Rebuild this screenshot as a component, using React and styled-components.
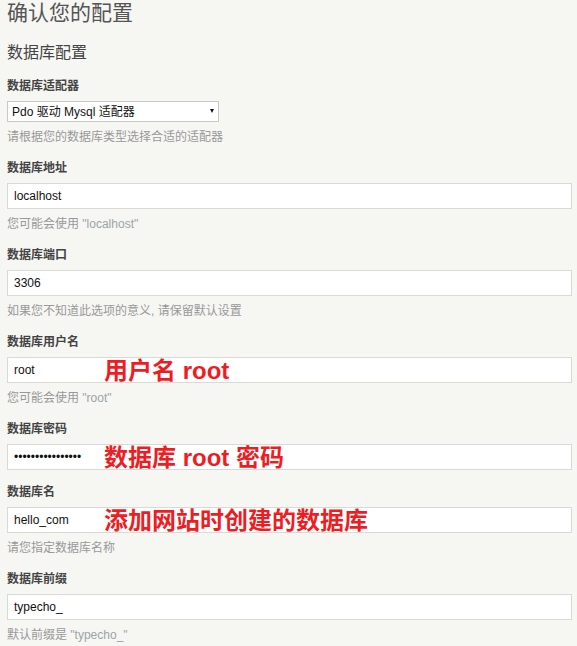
import React from "react";
import styled, { createGlobalStyle } from "styled-components";

const GlobalStyle = createGlobalStyle`
  html, body {
    margin: 0;
    padding: 0;
    background: #f6f6f3;
  }
  body {
    font-family: "Liberation Sans", "Noto Sans CJK SC", sans-serif;
    font-size: 12px;
    color: #444;
  }
`;

const Page = styled.div`
  padding: 1px 5px 0 7px;
`;

const Title = styled.h1`
  margin: 0;
  font-size: 21px;
  line-height: 24px;
  font-weight: normal;
  color: #555;
`;

const SectionTitle = styled.h2`
  margin: 18px 0 14px;
  font-size: 16px;
  line-height: 20px;
  font-weight: normal;
  color: #444;
`;

const Field = styled.div`
  display: flex;
  flex-direction: column;
  gap: 6px;
  margin-bottom: 13px;
`;

const Label = styled.label`
  font-weight: bold;
  line-height: 18px;
  color: #444;
`;

const InputWrap = styled.div`
  position: relative;
`;

const Input = styled.input`
  display: block;
  box-sizing: border-box;
  width: 100%;
  height: 26px;
  margin: 0;
  padding: 0 6px;
  border: 1px solid #d9d9d6;
  background: #fff;
  font-family: "Liberation Sans", "Noto Sans CJK SC", sans-serif;
  font-size: 12px;
  color: #111;
  outline: none;
`;

const SelectWrap = styled.div`
  position: relative;
  width: 212px;
`;

const Select = styled.select`
  display: block;
  box-sizing: border-box;
  width: 100%;
  height: 21px;
  margin: 0;
  padding: 0 0 0 4px;
  border: 1px solid #c8c8c8;
  border-radius: 0;
  background: #fff;
  appearance: none;
  font-family: "Liberation Sans", "Noto Sans CJK SC", sans-serif;
  font-size: 12px;
  color: #111;
  outline: none;
`;

const Arrow = styled.span`
  position: absolute;
  right: 5px;
  top: 8px;
  width: 0;
  height: 0;
  border-left: 2.5px solid transparent;
  border-right: 2.5px solid transparent;
  border-top: 4px solid #111;
  pointer-events: none;
`;

const Hint = styled.p`
  margin: 0;
  line-height: 18px;
  color: #999;
`;

const Code = styled.span`
  color: #9aa5a5;
`;

const Note = styled.span`
  position: absolute;
  left: 97px;
  top: 1px;
  line-height: 26px;
  font-size: 24px;
  font-weight: bold;
  color: #ee1d24;
  white-space: nowrap;
  pointer-events: none;
`;

const fields = [
  { id: "host", label: "数据库地址", value: "localhost", hint: <>您可能会使用 <Code>"localhost"</Code></> },
  { id: "port", label: "数据库端口", value: "3306", hint: "如果您不知道此选项的意义, 请保留默认设置" },
  { id: "user", label: "数据库用户名", value: "root", hint: <>您可能会使用 <Code>"root"</Code></>, note: "用户名 root" },
  { id: "password", label: "数据库密码", value: "0000000000000000", type: "password", note: "数据库 root 密码" },
  { id: "database", label: "数据库名", value: "hello_com", hint: "请您指定数据库名称", note: "添加网站时创建的数据库" },
  { id: "prefix", label: "数据库前缀", value: "typecho_", hint: <>默认前缀是 <Code>"typecho_"</Code></> },
];

const App = () => {
  return (
    <Page>
      <GlobalStyle />
      <Title>确认您的配置</Title>
      <SectionTitle>数据库配置</SectionTitle>

      <Field>
        <Label htmlFor="adapter">数据库适配器</Label>
        <SelectWrap>
          <Select id="adapter" defaultValue="mysql">
            <option value="mysql">Pdo 驱动 Mysql 适配器</option>
          </Select>
          <Arrow />
        </SelectWrap>
        <Hint>请根据您的数据库类型选择合适的适配器</Hint>
      </Field>

      {fields.map(field => (
        <Field key={field.id}>
          <Label htmlFor={field.id}>{field.label}</Label>
          <InputWrap>
            <Input id={field.id} type={field.type || "text"} defaultValue={field.value} />
            {field.note && <Note>{field.note}</Note>}
          </InputWrap>
          {field.hint && <Hint>{field.hint}</Hint>}
        </Field>
      ))}
    </Page>
  );
};

export default App;
